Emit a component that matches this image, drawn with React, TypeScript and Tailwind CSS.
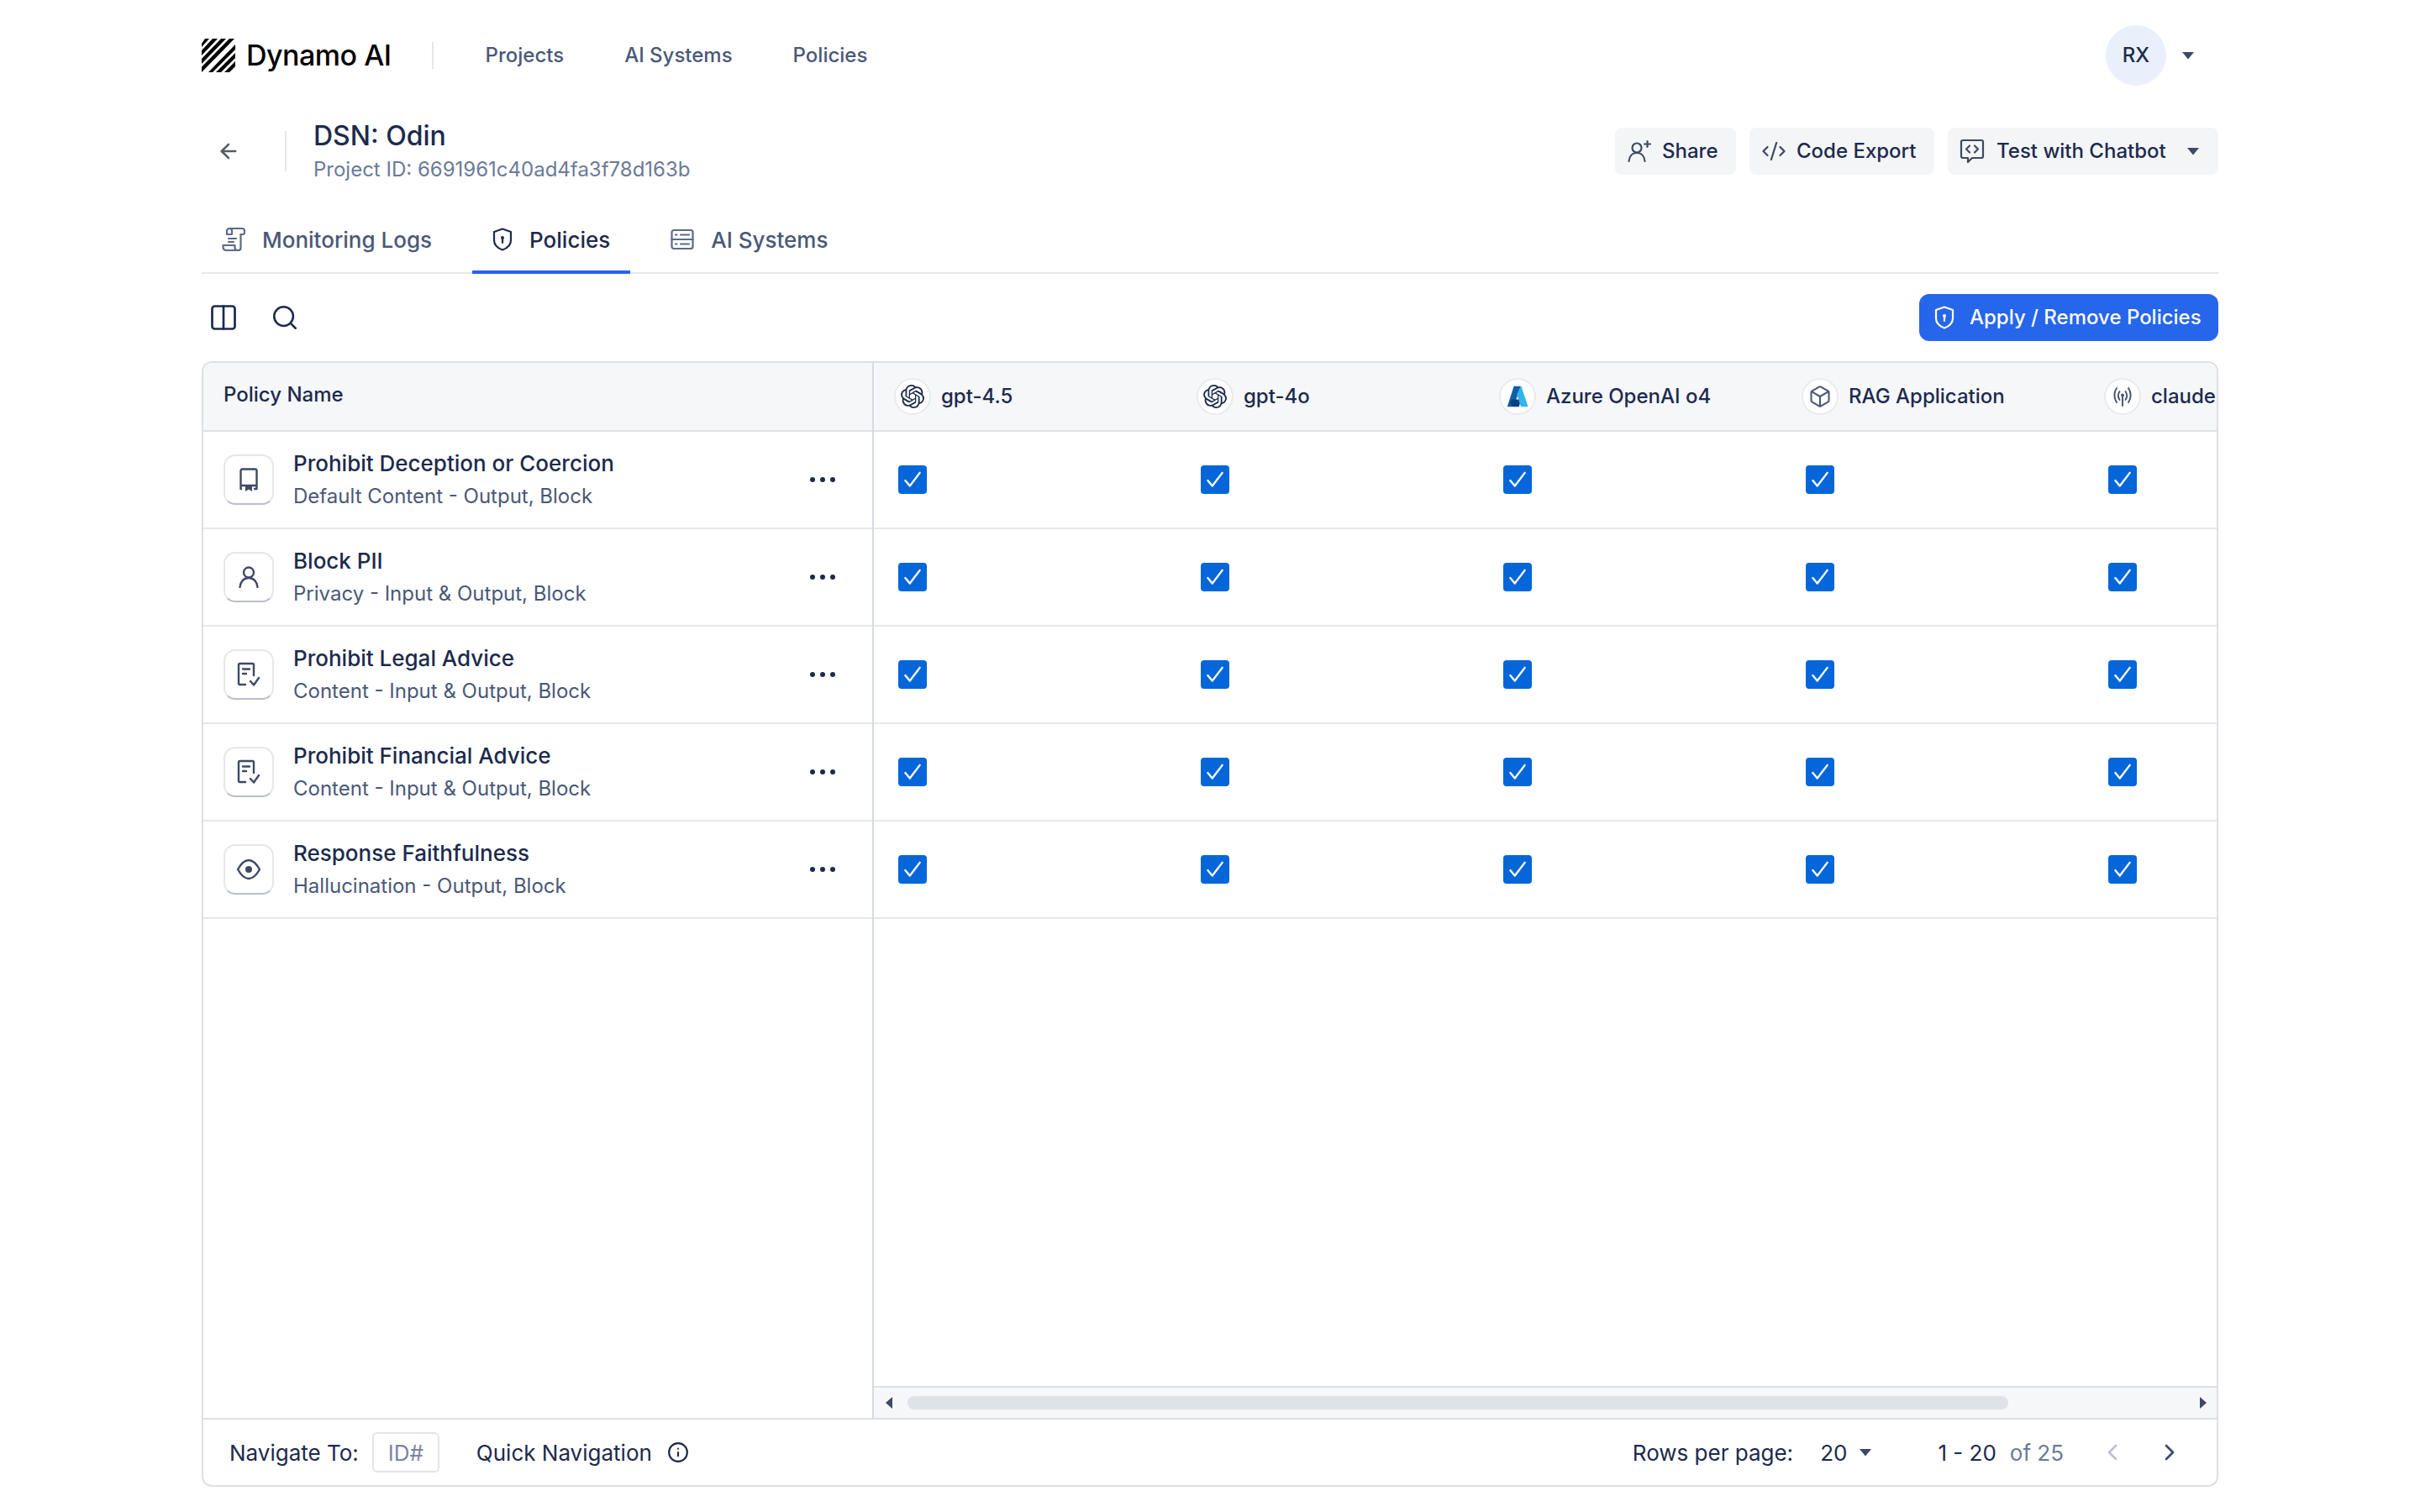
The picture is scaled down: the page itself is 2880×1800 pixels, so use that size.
import React from "react";
import { SiOpenai } from "react-icons/si";
import { Box, ChevronLeft, ChevronRight, Columns2, Search, Info, ArrowLeft, Code2, Eye } from "lucide-react";

const Caret = ({ cls }: { cls: string }) => (
  <svg viewBox="0 0 16 10" className={cls} fill="#3d4a66"><path d="M1 1h14L8 9.5z" /></svg>
);

const ShieldIcon = ({ cls, color }: { cls: string; color: string }) => (
  <svg viewBox="0 0 24 28" className={cls} fill="none" stroke={color} strokeWidth="2.2" strokeLinejoin="round">
    <path d="M12 1.5 22 5v10c0 6-4.500 9.500-10 11.500C6.500 24.500 2 21 2 15V5z" />
    <circle cx="12" cy="12" r="2" fill={color} stroke="none" />
    <path d="M12 13v5" strokeLinecap="round" />
  </svg>
);

const LogsIcon = () => (
  <svg viewBox="0 0 28 28" className="w-[28px] h-[28px]" fill="none" stroke="#5a6a8a" strokeWidth="2.200" strokeLinecap="round" strokeLinejoin="round">
    <path d="M6 8V4a3 3 0 0 1 3-3h15a3 3 0 0 1 3 3v2a2 2 0 0 1-2 2h-2.500M9 1a3 3 0 0 1 3 3v4H6" />
    <path d="M22.500 8v16a3 3 0 0 1-3 3H5a3.500 3.500 0 0 1-3.500-3.500V21h14v3a3 3 0 0 0 3 3" />
    <path d="M8 13h9M8 17h6" />
  </svg>
);

const ServerIcon = () => (
  <svg viewBox="0 0 28 28" className="w-[28px] h-[28px]" fill="none" stroke="#5a6a8a" strokeWidth="2.200" strokeLinecap="round" strokeLinejoin="round">
    <rect x="1.500" y="3" width="25" height="22" rx="2.500" />
    <path d="M1.500 14h25M12 8.500h10M12 19.500h10M6 8.500h1.500M6 19.500h1.500" />
  </svg>
);

const ShareIcon = () => (
  <svg viewBox="0 0 30 30" className="w-[30px] h-[30px]" fill="none" stroke="#3d4a66" strokeWidth="2.200" strokeLinecap="round" strokeLinejoin="round">
    <circle cx="12" cy="11" r="5.500" />
    <path d="M2.500 27c.5-6 4-10 9.500-10s9 4 9.500 10M24.500 3v7M21 6.500h7" />
  </svg>
);

const ChatIcon = () => (
  <svg viewBox="0 0 30 30" className="w-[30px] h-[30px]" fill="none" stroke="#3d4a66" strokeWidth="2.200" strokeLinecap="round" strokeLinejoin="round">
    <path d="M4 2h22a2 2 0 0 1 2 2v17a2 2 0 0 1-2 2H15l-5 5v-5H4a2 2 0 0 1-2-2V4a2 2 0 0 1 2-2z" />
    <path d="m12 8.500-4 4 4 4M18 8.500l4 4-4 4" />
  </svg>
);

const BookIcon = () => (
  <svg viewBox="0 0 24 28" className="w-[24px] h-[28px]" fill="none" stroke="#3d4a66" strokeWidth="2.400" strokeLinejoin="round">
    <path d="M4 25H2.500V3.500a2 2 0 0 1 2-2h15a2 2 0 0 1 2 2V25H18M2.500 21h19" />
    <path d="M8 21h8v7l-4-2.500L8 28z" fill="#3d4a66" stroke="none" />
  </svg>
);

const PersonIcon = () => (
  <svg viewBox="0 0 24 26" className="w-[24px] h-[26px]" fill="none" stroke="#3d4a66" strokeWidth="2.400" strokeLinecap="round">
    <circle cx="12" cy="7.500" r="6" />
    <path d="M1.500 25c.5-6.500 4.500-11 10.500-11s10 4.500 10.500 11" />
  </svg>
);

const DocCheckIcon = () => (
  <svg viewBox="0 0 28 30" className="w-[28px] h-[30px]" fill="none" stroke="#3d4a66" strokeWidth="2.400" strokeLinecap="round" strokeLinejoin="round">
    <path d="M10 27H3.500a1.500 1.500 0 0 1-1.500-1.500v-22A1.500 1.500 0 0 1 3.500 2h15A1.500 1.500 0 0 1 20 3.500V16" />
    <path d="M7 8.500h8M7 14h4M16 23l4 4.500 6-8.500" />
  </svg>
);

const EyeIcon = () => (
  <svg viewBox="0 0 30 26" className="w-[30px] h-[26px]" fill="none" stroke="#3d4a66" strokeWidth="2.400" strokeLinejoin="round">
    <path d="M15 2c5 0 9 4 13 11-4 7-8 11-13 11S6 20 2 13C6 6 10 2 15 2z" />
    <circle cx="15" cy="13" r="4" fill="#3d4a66" stroke="none" />
  </svg>
);

const Azure = () => (
  <svg viewBox="0 0 96 96" className="w-[28px] h-[28px]">
    <path d="M33 6h28L32 90H6z" fill="#0f5ea8" />
    <path d="M62 60H24l-6 18 14 12h22z" fill="#0a3f80" />
    <path d="M61 6h2l28 84H62L45 40z" fill="#33b4ea" />
  </svg>
);

const RadioIcon = () => (
  <svg viewBox="0 0 28 28" className="w-[28px] h-[28px]" fill="none" stroke="#4b5875" strokeWidth="2" strokeLinecap="round">
    <path d="M7 4c-3.500 5-3.500 12 0 17M21 4c3.500 5 3.500 12 0 17M10.500 8c-2 3-2 7 0 10M17.500 8c2 3 2 7 0 10M14 14v11" />
    <circle cx="14" cy="12.500" r="2" fill="#4b5875" stroke="none" />
  </svg>
);

const Check = () => (
  <div className="w-[34px] h-[34px] rounded-[4px] bg-[#0466d9] flex items-center justify-center">
    <svg viewBox="0 0 24 24" className="w-[26px] h-[26px]" fill="none" stroke="#fff" strokeWidth="2.200" strokeLinecap="round" strokeLinejoin="round">
      <path d="m4 13 5 6L20 4.500" />
    </svg>
  </div>
);

const models: { name: string; icon: React.ReactNode }[] = [
  { name: "gpt-4.5", icon: <SiOpenai className="w-[28px] h-[28px] text-[#1c2a4d]" /> },
  { name: "gpt-4o", icon: <SiOpenai className="w-[28px] h-[28px] text-[#1c2a4d]" /> },
  { name: "Azure OpenAI o4", icon: <Azure /> },
  { name: "RAG Application", icon: <Box className="w-[28px] h-[28px] text-[#4b5875]" strokeWidth={1.800} /> },
  { name: "claude", icon: <RadioIcon /> },
];

const rows: { title: string; sub: string; icon: React.ReactNode }[] = [
  { title: "Prohibit Deception or Coercion", sub: "Default Content - Output, Block", icon: <BookIcon /> },
  { title: "Block PII", sub: "Privacy - Input & Output, Block", icon: <PersonIcon /> },
  { title: "Prohibit Legal Advice", sub: "Content - Input & Output, Block", icon: <DocCheckIcon /> },
  { title: "Prohibit Financial Advice", sub: "Content - Input & Output, Block", icon: <DocCheckIcon /> },
  { title: "Response Faithfulness", sub: "Hallucination - Output, Block", icon: <EyeIcon /> },
];

const Dots = () => (
  <div className="flex gap-[6px]">
    <span className="w-[6px] h-[6px] rounded-full bg-[#1c2a4d]" />
    <span className="w-[6px] h-[6px] rounded-full bg-[#1c2a4d]" />
    <span className="w-[6px] h-[6px] rounded-full bg-[#1c2a4d]" />
  </div>
);

export default function App() {
  return (
    <div className="w-[2880px] h-[1800px] bg-white px-[240px] font-['Inter',sans-serif] text-[#1c2a4d] overflow-hidden">
      {/* top nav */}
      <div className="h-[132px] flex items-center">
        <svg viewBox="0 0 40 40" className="w-[40px] h-[40px] shrink-0" fill="#000">
          <path d="M4 0h5L0 10V6zM13 0h6L0 20v-6zM23 0h6L0 30v-6zM33 0h6L0 40v-2l.1-4.500zM40 7v6L13 40H8zM40 17v6L23 40h-6zM40 27v6l-7 7h-6z" />
        </svg>
        <span className="ml-[13px] text-[34px] font-medium text-black tracking-[-0.5px] leading-none">Dynamo AI</span>
        <div className="ml-[48px] w-[2px] h-[32px] bg-[#e5e7eb]" />
        <nav className="ml-[62px] flex gap-[72px] text-[24px] font-medium text-[#4a5878]">
          <span>Projects</span>
          <span>AI Systems</span>
          <span>Policies</span>
        </nav>
        <div className="ml-auto flex items-center gap-[18px] pr-[28px]">
          <div className="w-[72px] h-[72px] rounded-full bg-[#eaf0fb] flex items-center justify-center text-[24px] font-medium text-[#1c2a4d]">RX</div>
          <Caret cls="w-[16px] h-[10px]" />
        </div>
      </div>

      {/* page header */}
      <div className="h-[96px] flex items-center">
        <ArrowLeft className="ml-[18px] w-[28px] h-[28px] text-[#555b66]" strokeWidth={2.200} />
        <div className="ml-[53px] w-[2px] h-[48px] bg-[#e5e7eb]" />
        <div className="ml-[32px] flex flex-col">
          <span className="text-[32px] leading-[40px] font-medium text-[#1c2a4d]">DSN: Odin</span>
          <span className="mt-[4px] text-[24px] leading-[32px] text-[#6b7a99]">Project ID: 6691961c40ad4fa3f78d163b</span>
        </div>
        <div className="ml-auto flex gap-[16px] text-[24px] font-medium text-[#1c2a4d]">
          <button className="h-[56px] w-[144px] rounded-[8px] bg-[#f4f5f7] flex items-center gap-[12px] pl-[14px]">
            <ShareIcon />
            <span>Share</span>
          </button>
          <button className="h-[56px] w-[220px] rounded-[8px] bg-[#f4f5f7] flex items-center gap-[12px] pl-[14px]">
            <Code2 className="w-[30px] h-[30px] text-[#3d4a66]" strokeWidth={1.800} />
            <span>Code Export</span>
          </button>
          <button className="h-[56px] w-[322px] rounded-[8px] bg-[#f4f5f7] flex items-center gap-[14px] pl-[14px]">
            <ChatIcon />
            <span>Test with Chatbot</span>
            <Caret cls="ml-[10px] w-[16px] h-[10px]" />
          </button>
        </div>
      </div>

      {/* tabs */}
      <div className="h-[98px] border-b-2 border-[#e5e7eb] flex items-end gap-[24px] text-[26px] font-medium text-[#4a5878]">
        <div className="h-[70px] -mb-[2px] px-[24px] flex items-center gap-[20px] pb-[12px]">
          <LogsIcon />
          <span>Monitoring Logs</span>
        </div>
        <div className="h-[70px] -mb-[2px] px-[24px] flex items-center gap-[20px] pb-[8px] border-b-4 border-[#2563eb] text-[#1c2a4d]">
          <ShieldIcon cls="w-[24px] h-[28px]" color="#1c2a4d" />
          <span>Policies</span>
        </div>
        <div className="h-[70px] -mb-[2px] px-[24px] flex items-center gap-[20px] pb-[12px]">
          <ServerIcon />
          <span>AI Systems</span>
        </div>
      </div>

      {/* toolbar */}
      <div className="h-[104px] flex items-center">
        <Columns2 className="ml-[8px] w-[36px] h-[36px] text-[#1c2a4d]" strokeWidth={1.800} />
        <Search className="ml-[38px] w-[34px] h-[34px] text-[#1c2a4d]" strokeWidth={1.800} />
        <button className="ml-auto h-[56px] w-[356px] rounded-[12px] bg-[#2666eb] text-white text-[24px] font-medium flex items-center gap-[18px] pl-[18px]">
          <ShieldIcon cls="w-[24px] h-[28px]" color="#fff" />
          <span>Apply / Remove Policies</span>
        </button>
      </div>

      {/* table */}
      <div className="h-[1340px] border-2 border-[#dde0e6] rounded-[12px] overflow-hidden flex flex-col">
        <div className="flex-1 min-h-0 flex">
          {/* left column */}
          <div className="w-[798px] shrink-0 border-r-2 border-[#d5d9e2] flex flex-col">
            <div className="h-[82px] shrink-0 bg-[#f6f7f9] border-b-2 border-[#dde0e6] flex items-center pl-[24px] text-[24px] font-medium pb-[4px]">
              Policy Name
            </div>
            {rows.map((r) => (
              <div key={r.title} className="h-[116px] shrink-0 border-b-2 border-[#e5e7eb] flex items-center pl-[24px] pr-[44px]">
                <div className="w-[60px] h-[60px] rounded-[14px] border-2 border-[#e5e7eb] border-b-[#b9bec9] flex items-center justify-center shrink-0">
                  {r.icon}
                </div>
                <div className="ml-[23px] flex flex-col">
                  <span className="text-[26px] leading-[36px] font-medium text-[#1c2a4d]">{r.title}</span>
                  <span className="mt-[3px] text-[24px] leading-[36px] text-[#4a5878]">{r.sub}</span>
                </div>
                <div className="ml-auto"><Dots /></div>
              </div>
            ))}
          </div>
          {/* right */}
          <div className="flex-1 min-w-0 flex flex-col">
            <div className="flex-1 min-h-0 overflow-hidden">
              <div className="flex h-[82px] bg-[#f6f7f9] border-b-2 border-[#dde0e6] w-[1598px] overflow-hidden">
                {models.map((m) => (
                  <div key={m.name} className="w-[360px] shrink-0 flex items-center pl-[24px] gap-[12px] text-[24px] font-medium whitespace-nowrap">
                    <div className="w-[44px] h-[44px] rounded-full bg-white border-2 border-[#e8eaee] flex items-center justify-center shrink-0">
                      {m.icon}
                    </div>
                    <span>{m.name}</span>
                  </div>
                ))}
              </div>
              {rows.map((r) => (
                <div key={r.title} className="h-[116px] border-b-2 border-[#e5e7eb] flex items-center">
                  {models.map((m) => (
                    <div key={m.name} className="w-[360px] shrink-0 pl-[29px]"><Check /></div>
                  ))}
                </div>
              ))}
            </div>
            {/* scrollbar */}
            <div className="h-[38px] shrink-0 bg-[#f6f7f9] border-t-2 border-[#dde0e6] flex items-center pl-[14px] pr-[12px]">
              <svg viewBox="0 0 8 14" className="w-[8px] h-[14px]" fill="#3d4a66"><path d="M8 0v14L0 7z" /></svg>
              <div className="ml-[18px] w-[1310px] h-[16px] rounded-full bg-[#dfe2e7]" />
              <svg viewBox="0 0 8 14" className="ml-auto w-[8px] h-[14px]" fill="#3d4a66"><path d="M0 0v14l8-7z" /></svg>
            </div>
          </div>
        </div>
        {/* footer */}
        <div className="h-[80px] shrink-0 border-t-2 border-[#dde0e6] flex items-center pl-[31px] text-[26px] text-[#1c2a4d]">
          <span>Navigate To:</span>
          <div className="ml-[16px] w-[80px] h-[48px] rounded-[6px] border-2 border-[#e2e5ea] flex items-center justify-center text-[#7b84a0]">ID#</div>
          <span className="ml-[44px]">Quick Navigation</span>
          <Info className="ml-[18px] w-[26px] h-[26px]" strokeWidth={2} />
          <span className="ml-auto">Rows per page:</span>
          <span className="ml-[32px]">20</span>
          <Caret cls="ml-[14px] w-[16px] h-[10px]" />
          <span className="ml-[78px]">1 - 20</span>
          <span className="ml-[16px] text-[#6b7a99]">of 25</span>
          <ChevronLeft className="ml-[42px] w-[32px] h-[32px] text-[#bcc2cf]" strokeWidth={2} />
          <ChevronRight className="ml-[36px] mr-[40px] w-[32px] h-[32px] text-[#3d4a66]" strokeWidth={2} />
        </div>
      </div>
    </div>
  );
}
